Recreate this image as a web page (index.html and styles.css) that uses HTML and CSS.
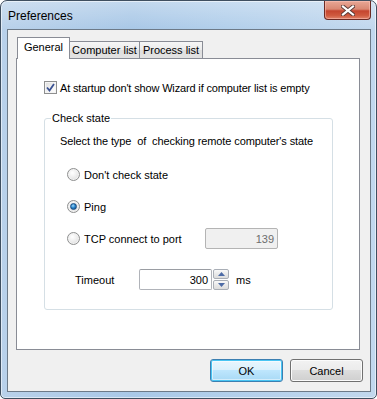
FILE: index.html
```html
<!DOCTYPE html>
<html>
<head>
<meta charset="utf-8">
<link rel="stylesheet" href="styles.css">
</head>
<body>
<div class="window">
  <div class="titlebar">
    <span class="title">Preferences</span>
    <div class="close">
      <svg width="14" height="11" viewBox="0 0 14 11">
        <path d="M2 1.5 L12 9.5 M12 1.5 L2 9.5" stroke="#5a3a36" stroke-width="4" stroke-linecap="square" fill="none"/>
        <path d="M2 1.5 L12 9.5 M12 1.5 L2 9.5" stroke="#ffffff" stroke-width="2.2" stroke-linecap="square" fill="none"/>
      </svg>
    </div>
  </div>
  <div class="client">
    <div class="tabs">
      <div class="tab active">General</div>
      <div class="tab">Computer list</div>
      <div class="tab">Process list</div>
    </div>
    <div class="panel">
      <div class="check-row">
        <span class="cbox">
          <svg width="9" height="9" viewBox="0 0 9 9"><path d="M1 4.5 L3.5 7.5 L8 1" stroke="#3a5192" stroke-width="1.8" fill="none"/></svg>
        </span>
        <span>At startup don't show Wizard if computer list is empty</span>
      </div>
      <div class="group">
        <span class="legend">Check state</span>
        <div class="desc">Select the type&nbsp; of&nbsp; checking remote computer's state</div>
        <div class="radio-row first"><span class="radio"></span><span class="rlabel">Don't check state</span></div>
        <div class="radio-row"><span class="radio on"><span class="dot"></span></span><span class="rlabel">Ping</span></div>
        <div class="radio-row"><span class="radio"></span><span class="rlabel">TCP connect to port</span><span class="field disabled">139</span></div>
        <div class="timeout-row">
          <span class="tlabel">Timeout</span>
          <span class="field num">300</span>
          <span class="spin">
            <span class="spin-btn"><svg width="7" height="4" viewBox="0 0 7 4"><path d="M0 4 L3.5 0 L7 4 Z" fill="#4d6ba6"/></svg></span>
            <span class="spin-btn"><svg width="7" height="4" viewBox="0 0 7 4"><path d="M0 0 L3.5 4 L7 0 Z" fill="#4d6ba6"/></svg></span>
          </span>
          <span class="unit">ms</span>
        </div>
      </div>
    </div>
    <div class="buttons">
      <div class="btn default">OK</div>
      <div class="btn">Cancel</div>
    </div>
  </div>
</div>
</body>
</html>
```
FILE: styles.css
```css
* { box-sizing: border-box; }
html, body { margin: 0; padding: 0; background: #ffffff; }
body {
  font-family: "Liberation Sans", Arial, sans-serif;
  font-size: 11px;
  color: #000;
}
.window {
  width: 377px;
  height: 399px;
  border: 1px solid #3f4f60;
  border-radius: 7px 7px 5px 5px;
  background:
    linear-gradient(to bottom, rgba(255,255,255,0.3) 0px, rgba(255,255,255,0) 28px),
    linear-gradient(to right, #b9d1ea 0%, #a9c8e7 35%, #b2cfeb 60%, #c2d8ee 100%);
  padding: 0 5px 6px 6px;
  display: flex;
  flex-direction: column;
  box-shadow: inset 0 0 0 1px rgba(255,255,255,0.55);
}
.titlebar {
  height: 28px;
  display: flex;
  align-items: center;
  padding-left: 1px;
  flex: none;
}
.title {
  font-family: "Liberation Sans", Arial, sans-serif;
  font-size: 12px;
  color: #000;
  margin-top: 1px;
}
.close {
  margin-left: auto;
  align-self: flex-start;
  width: 47px;
  height: 19px;
  border: 1px solid #6b2a24;
  border-top: 0;
  border-radius: 0 0 4px 4px;
  background: linear-gradient(to bottom, #e8a796 0%, #d98873 45%, #c5452f 55%, #cf5a3f 80%, #e0836a 100%);
  display: flex;
  align-items: center;
  justify-content: center;
  box-shadow: inset 0 0 0 1px rgba(255,200,190,0.5);
}
.client {
  width: 364px;
  height: 363px;
  border: 1px solid #6d7a88;
  background: #f0f0f0;
  flex: none;
}
.tabs {
  display: flex;
  align-items: flex-end;
  height: 21px;
  margin-top: 7px;
  margin-left: 9px;
}
.tab {
  height: 17px;
  border: 1px solid #898c95;
  border-bottom: 0;
  background: linear-gradient(to bottom, #f6f6f6 0%, #ebebeb 50%, #dedede 51%, #e2e2e2 100%);
  padding: 0;
  display: flex;
  align-items: center;
  justify-content: center;
  margin-left: -1px;
  line-height: 13px;
  white-space: nowrap;
  flex: none;
}
.tab:nth-child(2) { width: 71px; }
.tab:nth-child(3) { width: 64px; }
.tab.active {
  width: 53px;
  height: 22px;
  margin-left: 0;
  margin-bottom: -1px;
  background: #ffffff;
  position: relative;
  z-index: 1;
  padding-bottom: 3px;
}
.panel {
  margin-left: 8px;
  width: 344px;
  height: 292px;
  border: 1px solid #898c95;
  background: #ffffff;
  padding-left: 27px;
  padding-top: 22px;
}
.check-row {
  display: flex;
  align-items: center;
  height: 13px;
  gap: 3px;
  white-space: nowrap;
  letter-spacing: -0.15px;
}
.cbox {
  width: 13px;
  height: 13px;
  border: 1px solid #8e8f8f;
  background: linear-gradient(135deg, #dcdcdc 0%, #f4f4f4 60%, #ffffff 100%);
  display: flex;
  align-items: center;
  justify-content: center;
  flex: none;
  box-shadow: inset 0 0 0 1px #f4f4f4;
  letter-spacing: 0;
}
.group {
  position: relative;
  margin-top: 24px;
  width: 289px;
  height: 192px;
  border: 1px solid #d5dfe5;
  border-radius: 3px;
}
.legend {
  position: absolute;
  left: 6px;
  top: -7px;
  line-height: 13px;
  background: #ffffff;
  padding: 0 1px;
}
.desc {
  margin-top: 16px;
  padding-left: 15px;
  height: 13px;
  line-height: 13px;
  white-space: nowrap;
  letter-spacing: -0.1px;
}
.radio-row {
  display: flex;
  align-items: center;
  height: 21px;
  padding-left: 22px;
  margin-top: 11px;
}
.radio-row.first { margin-top: 16px; }
.radio {
  width: 13px;
  height: 13px;
  border-radius: 50%;
  border: 1px solid #8e8f8f;
  background: radial-gradient(circle at 40% 35%, #ffffff 0%, #ececec 50%, #d2d2d2 100%);
  flex: none;
  display: flex;
  align-items: center;
  justify-content: center;
  box-shadow: inset 0 0 0 1px #f2f2f2;
}
.radio .dot {
  width: 7px;
  height: 7px;
  border-radius: 50%;
  background: radial-gradient(circle at 40% 35%, #9fd8fb 0%, #2a86cc 45%, #0d4480 100%);
  border: 1px solid #1b4c80;
}
.rlabel {
  margin-left: 4px;
  white-space: nowrap;
}
.radio-row .field { margin-left: auto; margin-right: 54px; }
.field {
  width: 73px;
  height: 21px;
  border: 1px solid #b0b3b9;
  border-top-color: #9a9da3;
  border-radius: 2px;
  background: #ffffff;
  display: flex;
  align-items: center;
  justify-content: flex-end;
  padding-right: 3px;
}
.field.disabled {
  background: #f0f0f0;
  color: #6d6d6d;
  border-color: #b4b4b4;
}
.timeout-row {
  display: flex;
  align-items: center;
  height: 21px;
  margin-top: 20px;
  padding-left: 30px;
}
.tlabel { width: 64px; }
.spin {
  display: flex;
  flex-direction: column;
  gap: 1px;
  margin-left: 1px;
  height: 21px;
}
.spin-btn {
  width: 16px;
  height: 10px;
  border: 1px solid #a9aeb6;
  border-radius: 2px;
  background: linear-gradient(to bottom, #f9f9f9 0%, #e9e9e9 50%, #dcdcdc 100%);
  display: flex;
  align-items: center;
  justify-content: center;
}
.unit { margin-left: 7px; }
.buttons {
  display: flex;
  justify-content: flex-end;
  gap: 7px;
  margin-top: 9px;
  padding-right: 7px;
}
.btn {
  width: 73px;
  height: 23px;
  border: 1px solid #707070;
  border-radius: 3px;
  background: linear-gradient(to bottom, #f2f2f2 0%, #ebebeb 49%, #dddddd 50%, #cfcfcf 100%);
  box-shadow: inset 0 0 0 1px #fbfbfb;
  display: flex;
  align-items: center;
  justify-content: center;
}
.btn.default {
  border-color: #3c7fb1;
  background: linear-gradient(to bottom, #eaf6fd 0%, #d9f0fc 49%, #bee6fd 50%, #a7d9f5 100%);
  box-shadow: inset 0 0 0 1px #48c5f3, inset 0 0 0 2px rgba(255,255,255,0.5);
}
```
